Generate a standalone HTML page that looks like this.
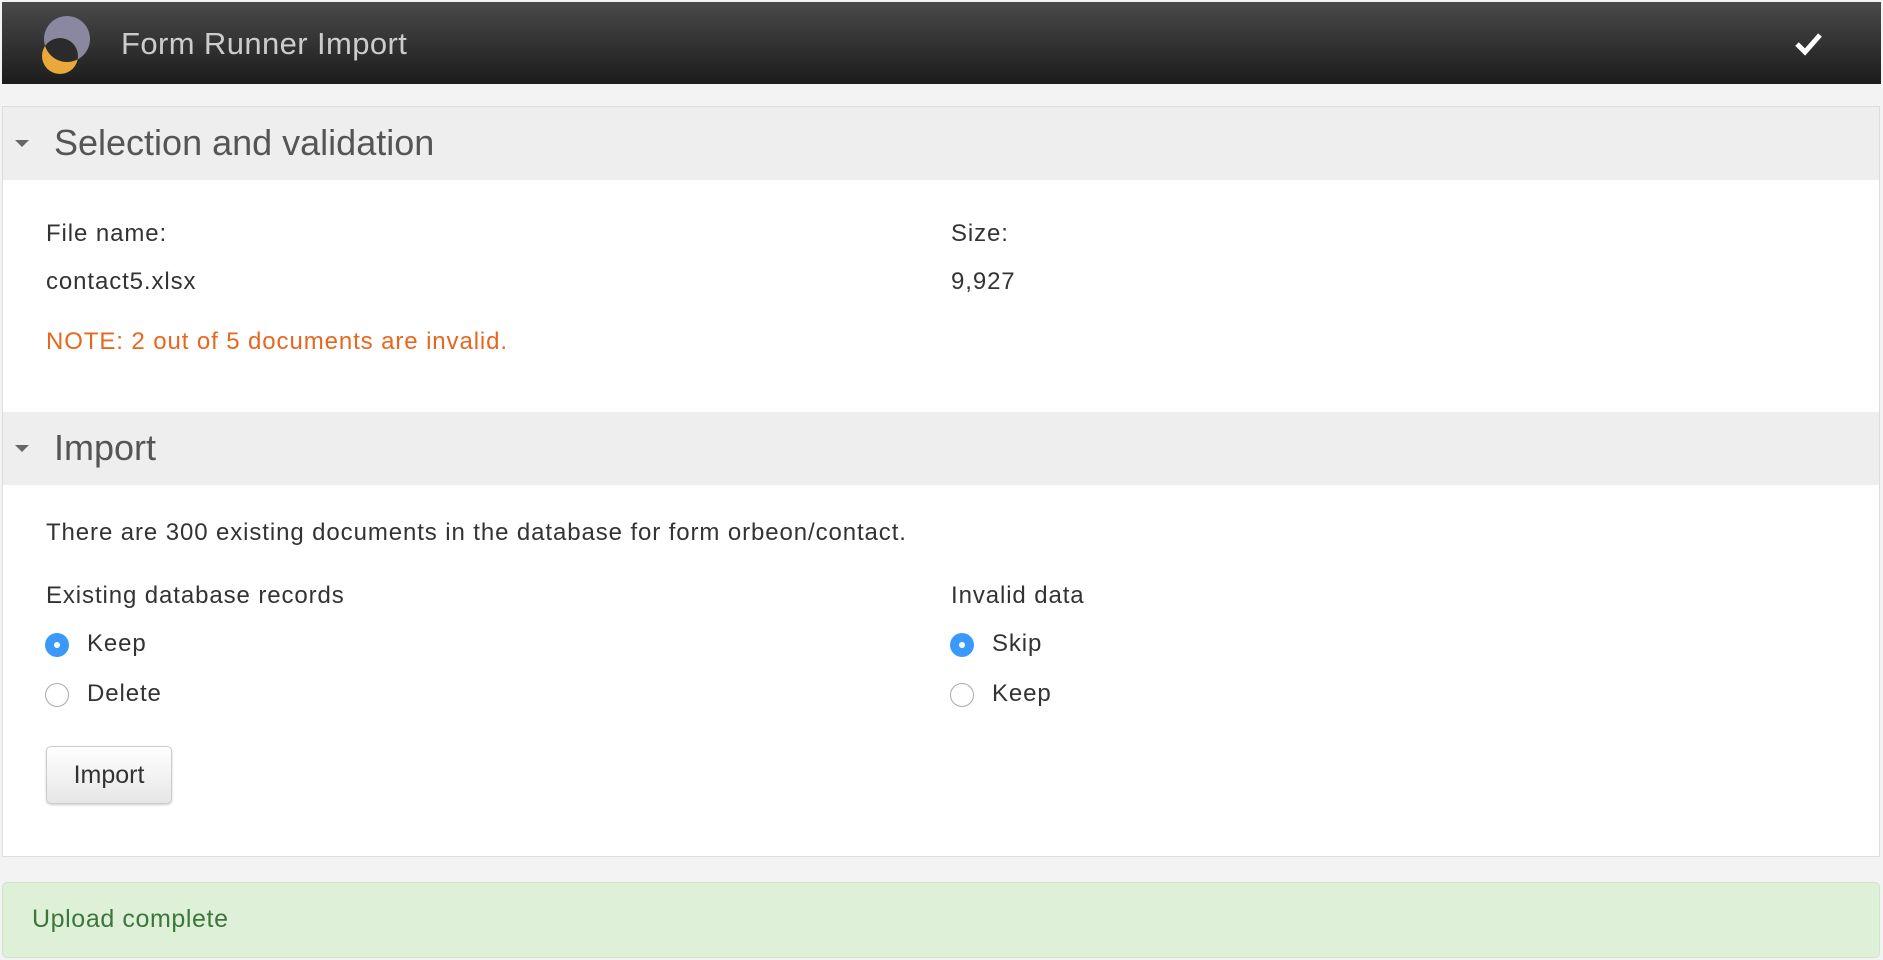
<!DOCTYPE html>
<html><head><style>
body{margin:0;width:1883px;height:960px;background:#f3f3f3;font-family:"Liberation Sans",Helvetica,Arial,sans-serif;position:relative;overflow:hidden}
.hdr{position:absolute;left:2px;top:2px;width:1879px;height:82px;background:linear-gradient(#4a4a4a,#1c1c1c)}
.hdr .t{position:absolute;left:119px;top:24px;font-size:31px;color:#ccc;letter-spacing:0.4px}
.box{position:absolute;left:2px;top:106px;width:1876px;height:749px;background:#fff;border:1px solid #ddd}
.sh{position:absolute;left:0;width:1876px;height:73px;background:#eee}
.sh span{position:absolute;left:51px;top:15px;font-size:36px;color:#555}
.sh i{position:absolute;left:12px;top:33px;width:0;height:0;border-left:7px solid transparent;border-right:7px solid transparent;border-top:7px solid #666}
.tx{position:absolute;font-size:24px;color:#333;white-space:nowrap;letter-spacing:0.9px}
.r{position:absolute;width:24px;height:24px;border-radius:50%;box-sizing:border-box;border:1px solid #aaa;background:#fff}
.r.on{background:#3b99fc;border:none}
.r.on:after{content:"";position:absolute;left:9px;top:9px;width:6px;height:6px;border-radius:50%;background:#fff}
.btn{position:absolute;width:126px;height:58px;box-sizing:border-box;border:1px solid #ccc;border-radius:5px;background:linear-gradient(#fff,#e6e6e6);box-shadow:0 1px 2px rgba(0,0,0,.2);font-size:25px;color:#333;text-align:center;line-height:56px}
.ok{position:absolute;left:2px;top:882px;width:1876px;height:74px;background:#dff0d8;border:1px solid #cfe6c4;border-radius:5px}
.ok span{position:absolute;left:29px;top:22px;font-size:25px;color:#3c763d;letter-spacing:0.6px}
</style></head><body>
<div class="hdr">
<svg style="position:absolute;left:36px;top:12px" width="60" height="60"><defs><clipPath id="c"><circle cx="29" cy="25" r="23"/></clipPath></defs><circle cx="29" cy="25" r="23" fill="#8a87a0"/><circle cx="22" cy="42" r="18" fill="#eba83a"/><circle cx="22" cy="42" r="18" fill="#2b2b2b" clip-path="url(#c)"/></svg>
<div class="t">Form Runner Import</div>
<svg style="position:absolute;left:1793px;top:30px" width="28" height="24"><path d="M2 12 L10 20 L25 3" stroke="#fff" stroke-width="5" fill="none"/></svg>
</div>
<div class="box">
<div class="sh" style="top:0"><i></i><span>Selection and validation</span></div>
<div class="tx" style="left:43px;top:113px">File name:</div>
<div class="tx" style="left:948px;top:113px">Size:</div>
<div class="tx" style="left:43px;top:161px">contact5.xlsx</div>
<div class="tx" style="left:948px;top:161px">9,927</div>
<div class="tx" style="left:43px;top:221px;color:#e8661e">NOTE: 2 out of 5 documents are invalid.</div>
<div class="sh" style="top:305px"><i></i><span>Import</span></div>
<div class="tx" style="left:43px;top:412px">There are 300 existing documents in the database for form orbeon/contact.</div>
<div class="tx" style="left:43px;top:475px">Existing database records</div>
<div class="tx" style="left:948px;top:475px">Invalid data</div>
<div class="r on" style="left:42px;top:526px"></div><div class="tx" style="left:84px;top:523px">Keep</div>
<div class="r" style="left:42px;top:576px"></div><div class="tx" style="left:84px;top:573px">Delete</div>
<div class="r on" style="left:947px;top:526px"></div><div class="tx" style="left:989px;top:523px">Skip</div>
<div class="r" style="left:947px;top:576px"></div><div class="tx" style="left:989px;top:573px">Keep</div>
<div class="btn" style="left:43px;top:639px">Import</div>
</div>
<div class="ok"><span>Upload complete</span></div>
</body></html>
